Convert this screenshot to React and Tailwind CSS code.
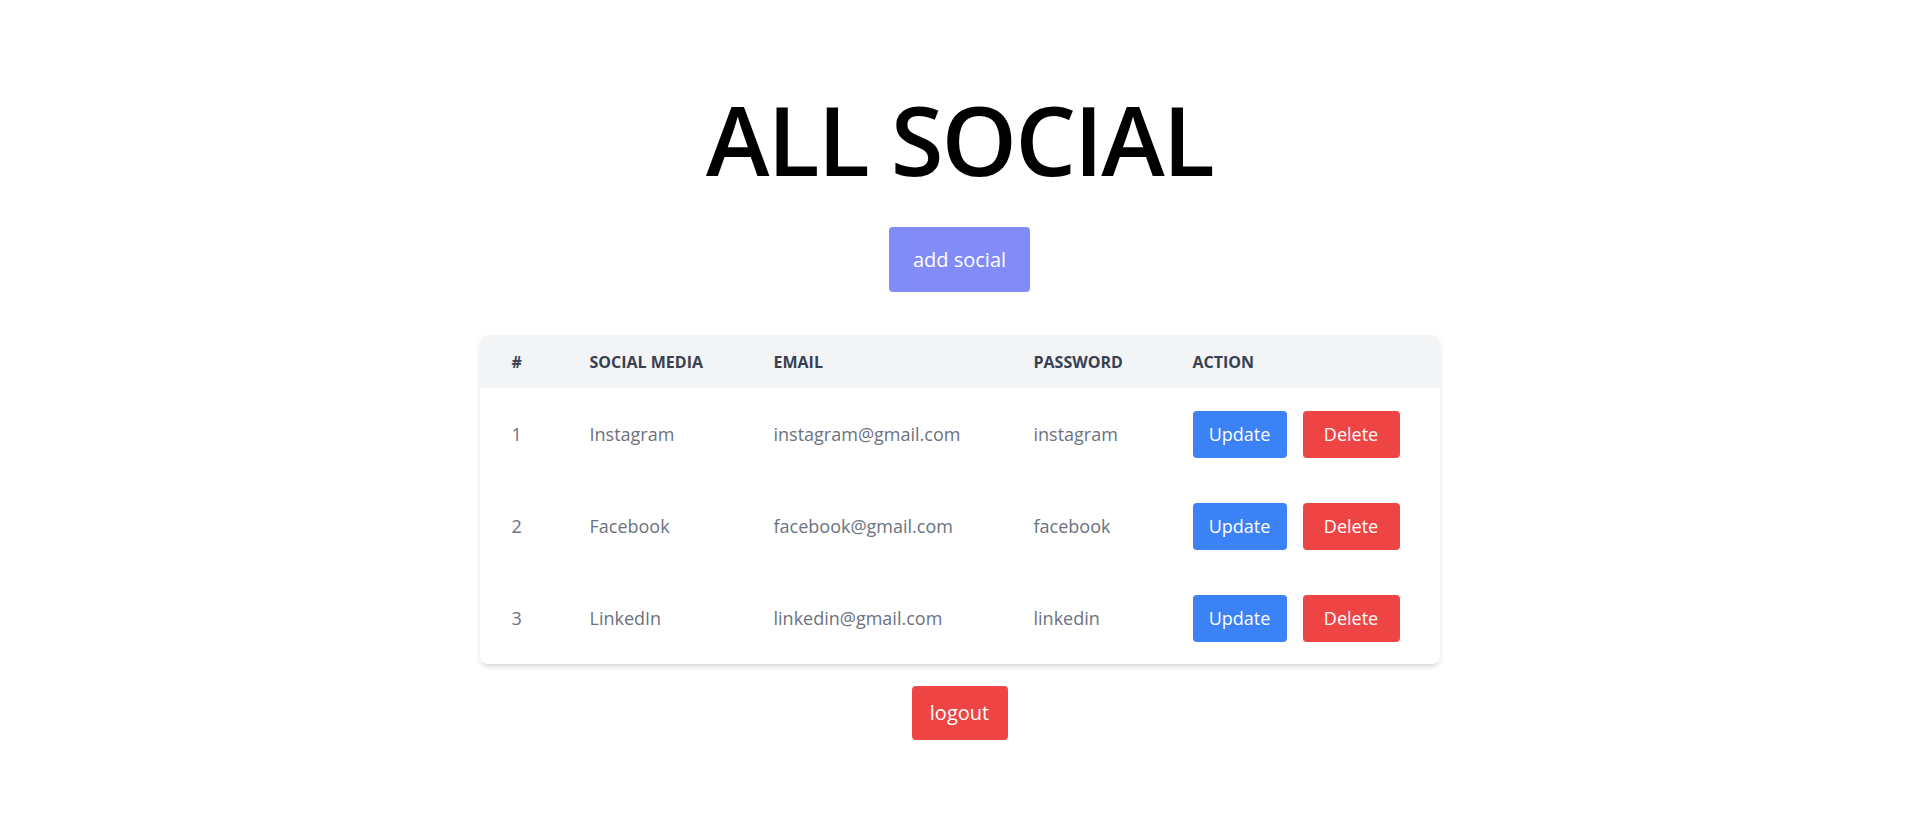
const ROWS = [
  { id: 1, social: 'Instagram', email: 'instagram@gmail.com', password: 'instagram' },
  { id: 2, social: 'Facebook', email: 'facebook@gmail.com', password: 'facebook' },
  { id: 3, social: 'LinkedIn', email: 'linkedin@gmail.com', password: 'linkedin' },
];

export default function App() {
  return (
    <div className="min-h-screen bg-white flex flex-col items-center pt-[91px] font-['Open_Sans','Noto_Sans',sans-serif]">
      <h1 className="text-8xl leading-none font-semibold text-black tracking-[-2px]">ALL SOCIAL</h1>

      <button className="mt-10 h-[65px] w-[141px] rounded bg-[#818cf8] text-white text-xl">add social</button>

      {/* tabla */}
      <div className="mt-[43px] w-[960px] bg-white rounded-lg shadow-[0_4px_6px_-1px_rgba(0,0,0,0.12),0_2px_4px_-2px_rgba(0,0,0,0.1)] overflow-hidden">
        <table className="w-full table-fixed text-left">
          <thead className="bg-[#f3f4f6]">
            <tr className="h-[53px] text-base font-bold text-[#374151] uppercase">
              <th className="w-[78px] pl-8">#</th>
              <th className="w-[184px] pl-8">Social Media</th>
              <th className="w-[260px] pl-8">Email</th>
              <th className="w-[159px] pl-8">Password</th>
              <th className="pl-8">Action</th>
            </tr>
          </thead>
          <tbody>
            {ROWS.map(r => (
              <tr key={r.id} className="h-[92px] text-lg text-[#6b7280]">
                <td className="pl-8">{r.id}</td>
                <td className="pl-8">{r.social}</td>
                <td className="pl-8">{r.email}</td>
                <td className="pl-8">{r.password}</td>
                <td className="pl-8">
                  <div className="flex gap-4">
                    <button className="h-[47px] w-[94px] rounded bg-[#3b82f6] text-white text-lg">Update</button>
                    <button className="h-[47px] w-[97px] rounded bg-[#ef4444] text-white text-lg">Delete</button>
                  </div>
                </td>
              </tr>
            ))}
          </tbody>
        </table>
      </div>

      <button className="mt-[22px] h-[54px] w-[96px] rounded bg-[#ef4444] text-white text-xl">logout</button>
    </div>
  );
}
